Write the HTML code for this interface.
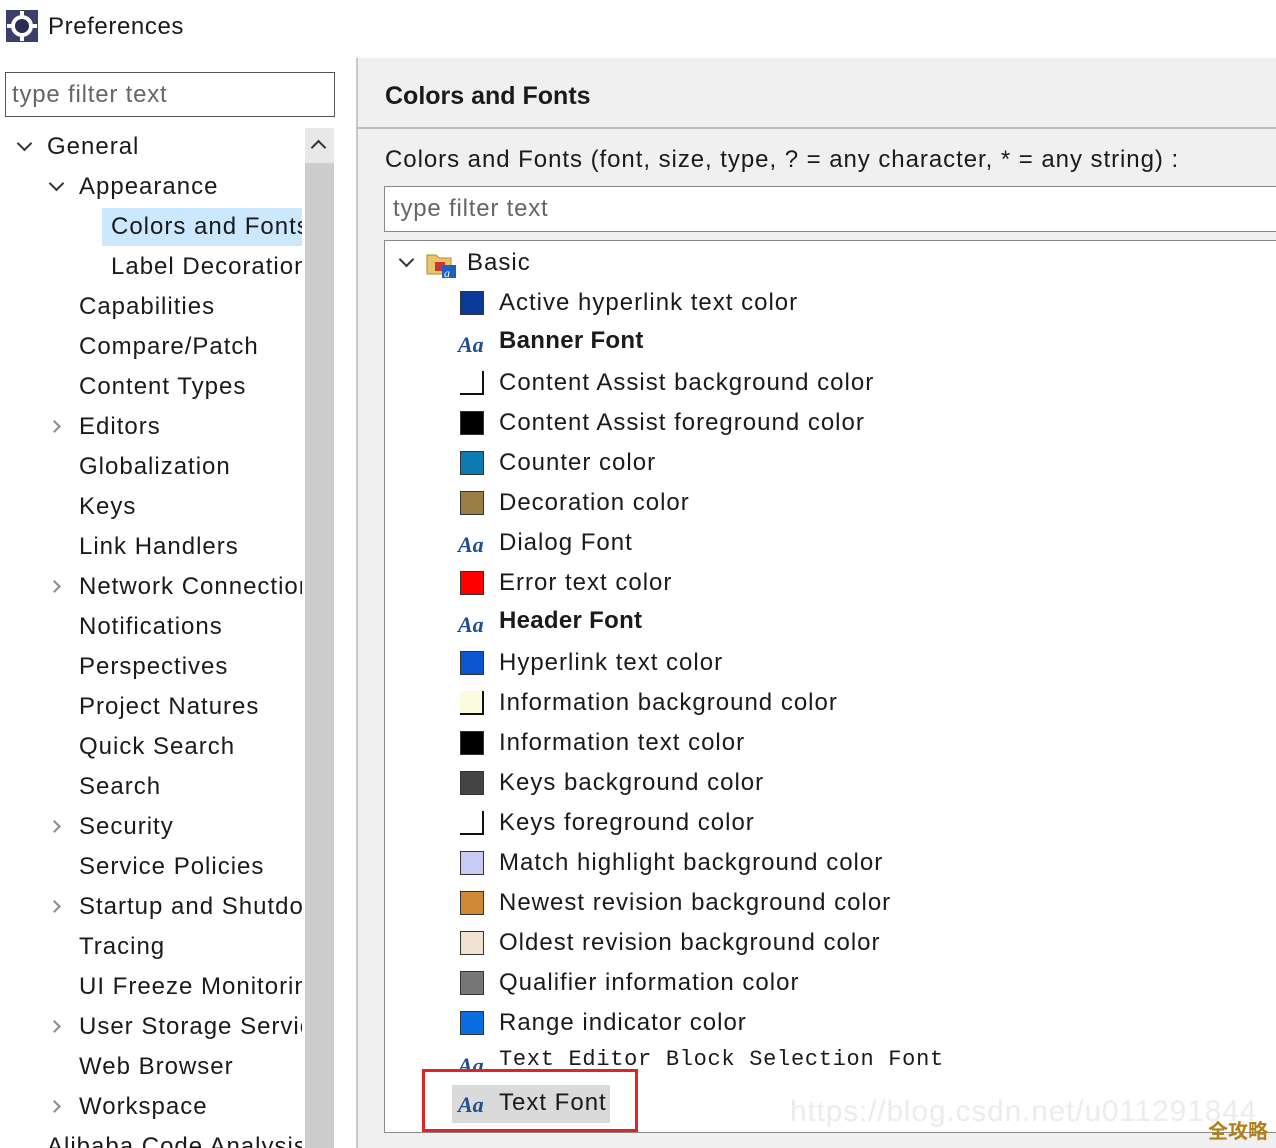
<!DOCTYPE html>
<html><head><meta charset="utf-8"><style>
*{margin:0;padding:0;box-sizing:border-box}
body{width:1276px;height:1148px;overflow:hidden;background:#fff;font-family:"Liberation Sans","DejaVu Sans",sans-serif;color:#1a1a1a;position:relative}
.a{position:absolute;white-space:nowrap}
.t{font-size:24px;line-height:40px;height:40px;letter-spacing:1px}
.sq{position:absolute;width:24px;height:24px;border:1px solid #333}
.lt{border:none;border-right:2px solid #111;border-bottom:2px solid #111}
.aa{position:absolute;font-family:"Liberation Serif",serif;font-style:italic;font-weight:bold;font-size:22px;color:#1f4f8f}
.chv{position:absolute;width:11px;height:11px;border-right:2px solid #333;border-bottom:2px solid #333}
.chr{position:absolute;width:9px;height:9px;border-right:2px solid #888;border-bottom:2px solid #888;transform:rotate(-45deg)}
</style></head><body>
<svg class="a" style="left:6px;top:10px" width="32" height="32" viewBox="0 0 32 32"><rect width="32" height="32" fill="#3b3f6b"/><circle cx="16" cy="16" r="11" fill="#fff"/><circle cx="16" cy="16" r="7" fill="#2a2e50"/><g fill="#fff"><rect x="14" y="1" width="4" height="5"/><rect x="14" y="26" width="4" height="5"/><rect x="1" y="14" width="5" height="4"/><rect x="26" y="14" width="5" height="4"/></g></svg>
<div class="a" style="left:48px;top:10px;font-size:24px;line-height:34px;letter-spacing:0.6px">Preferences</div>
<div class="a" style="left:5px;top:72px;width:330px;height:45px;border:1px solid #555;font-size:24px;line-height:43px;padding-left:6px;color:#666;letter-spacing:0.8px">type filter text</div>
<div class="a" style="left:305px;top:128px;width:29px;height:1020px;background:#e8e8e8"></div>
<div class="a" style="left:305px;top:163px;width:29px;height:985px;background:#cdcdcd"></div>
<div class="a" style="left:313px;top:142px;width:11px;height:11px;border-left:2px solid #333;border-top:2px solid #333;transform:rotate(45deg)"></div>
<div class="a" style="left:356px;top:58px;width:2px;height:1090px;background:#c8c8c8"></div>
<div class="a" style="left:0;top:0;width:302px;height:1148px;overflow:hidden">
<div class="chv" style="left:19px;top:138px;transform:rotate(45deg)"></div>
<div class="a t" style="left:47px;top:127px">General</div>
<div class="chv" style="left:51px;top:178px;transform:rotate(45deg)"></div>
<div class="a t" style="left:79px;top:167px">Appearance</div>
<div class="a" style="left:102px;top:208px;width:210px;height:38px;background:#cce8ff"></div>
<div class="a t" style="left:111px;top:207px">Colors and Fonts</div>
<div class="a t" style="left:111px;top:247px">Label Decorations</div>
<div class="a t" style="left:79px;top:287px">Capabilities</div>
<div class="a t" style="left:79px;top:327px">Compare/Patch</div>
<div class="a t" style="left:79px;top:367px">Content Types</div>
<div class="chr" style="left:50px;top:422px"></div><div class="a t" style="left:79px;top:407px">Editors</div>
<div class="a t" style="left:79px;top:447px">Globalization</div>
<div class="a t" style="left:79px;top:487px">Keys</div>
<div class="a t" style="left:79px;top:527px">Link Handlers</div>
<div class="chr" style="left:50px;top:582px"></div><div class="a t" style="left:79px;top:567px">Network Connections</div>
<div class="a t" style="left:79px;top:607px">Notifications</div>
<div class="a t" style="left:79px;top:647px">Perspectives</div>
<div class="a t" style="left:79px;top:687px">Project Natures</div>
<div class="a t" style="left:79px;top:727px">Quick Search</div>
<div class="a t" style="left:79px;top:767px">Search</div>
<div class="chr" style="left:50px;top:822px"></div><div class="a t" style="left:79px;top:807px">Security</div>
<div class="a t" style="left:79px;top:847px">Service Policies</div>
<div class="chr" style="left:50px;top:902px"></div><div class="a t" style="left:79px;top:887px">Startup and Shutdown</div>
<div class="a t" style="left:79px;top:927px">Tracing</div>
<div class="a t" style="left:79px;top:967px">UI Freeze Monitoring</div>
<div class="chr" style="left:50px;top:1022px"></div><div class="a t" style="left:79px;top:1007px">User Storage Service</div>
<div class="a t" style="left:79px;top:1047px">Web Browser</div>
<div class="chr" style="left:50px;top:1102px"></div><div class="a t" style="left:79px;top:1087px">Workspace</div>
<div class="a t" style="left:47px;top:1127px">Alibaba Code Analysis</div>
</div>
<div class="a" style="left:358px;top:58px;width:918px;height:1090px;background:#f0f0f0"></div>
<div class="a" style="left:385px;top:78px;font-size:25px;font-weight:bold;line-height:36px">Colors and Fonts</div>
<div class="a" style="left:358px;top:127px;width:918px;height:2px;background:#bdbdbd"></div>
<div class="a" style="left:385px;top:142px;font-size:24px;line-height:36px;letter-spacing:0.95px">Colors and Fonts (font, size, type, ? = any character, * = any string) :</div>
<div class="a" style="left:384px;top:186px;width:900px;height:46px;background:#fff;border:1px solid #888;font-size:24px;line-height:44px;padding-left:8px;color:#666;letter-spacing:0.8px">type filter text</div>
<div class="a" style="left:384px;top:240px;width:900px;height:893px;background:#fff;border:1px solid #888;overflow:hidden"></div>
<div class="chv" style="left:401px;top:254px;transform:rotate(45deg)"></div>
<svg class="a" style="left:425px;top:250px" width="32" height="28" viewBox="0 0 32 28"><path d="M2 5h9l3 3h12v16H2z" fill="#e9c66a" stroke="#b08a2a"/><rect x="10" y="12" width="10" height="9" fill="#c33"/><rect x="17" y="15" width="14" height="13" fill="#1e5fbf"/><text x="19" y="27" font-size="12" font-style="italic" font-family="Liberation Serif" fill="#fff">a</text></svg>
<div class="a t" style="left:467px;top:243px">Basic</div>
<div class="sq" style="left:460px;top:291px;background:#0a3b9a"></div><div class="a t" style="left:499px;top:283px">Active hyperlink text color</div>
<div class="aa" style="left:458px;top:332px">Aa</div><div class="a t" style="left:499px;top:321px;font-weight:bold;letter-spacing:0.3px">Banner Font</div>
<div class="sq lt" style="left:460px;top:371px"></div><div class="a t" style="left:499px;top:363px">Content Assist background color</div>
<div class="sq" style="left:460px;top:411px;background:#000"></div><div class="a t" style="left:499px;top:403px">Content Assist foreground color</div>
<div class="sq" style="left:460px;top:451px;background:#0a7ab0"></div><div class="a t" style="left:499px;top:443px">Counter color</div>
<div class="sq" style="left:460px;top:491px;background:#9b7d45"></div><div class="a t" style="left:499px;top:483px">Decoration color</div>
<div class="aa" style="left:458px;top:532px">Aa</div><div class="a t" style="left:499px;top:523px">Dialog Font</div>
<div class="sq" style="left:460px;top:571px;background:#ff0000"></div><div class="a t" style="left:499px;top:563px">Error text color</div>
<div class="aa" style="left:458px;top:612px">Aa</div><div class="a t" style="left:499px;top:601px;font-weight:bold;letter-spacing:0.3px">Header Font</div>
<div class="sq" style="left:460px;top:651px;background:#0a55d0"></div><div class="a t" style="left:499px;top:643px">Hyperlink text color</div>
<div class="sq lt" style="left:460px;top:691px;background:#fbfbe0"></div><div class="a t" style="left:499px;top:683px">Information background color</div>
<div class="sq" style="left:460px;top:731px;background:#000"></div><div class="a t" style="left:499px;top:723px">Information text color</div>
<div class="sq" style="left:460px;top:771px;background:#444"></div><div class="a t" style="left:499px;top:763px">Keys background color</div>
<div class="sq lt" style="left:460px;top:811px"></div><div class="a t" style="left:499px;top:803px">Keys foreground color</div>
<div class="sq" style="left:460px;top:851px;background:#c8ccf5"></div><div class="a t" style="left:499px;top:843px">Match highlight background color</div>
<div class="sq" style="left:460px;top:891px;background:#d08a36"></div><div class="a t" style="left:499px;top:883px">Newest revision background color</div>
<div class="sq" style="left:460px;top:931px;background:#f2e2d0"></div><div class="a t" style="left:499px;top:923px">Oldest revision background color</div>
<div class="sq" style="left:460px;top:971px;background:#777"></div><div class="a t" style="left:499px;top:963px">Qualifier information color</div>
<div class="sq" style="left:460px;top:1011px;background:#0a6ee0"></div><div class="a t" style="left:499px;top:1003px">Range indicator color</div>
<div class="aa" style="left:458px;top:1053px;height:18px;overflow:hidden">Aa</div><div class="a" style="left:499px;top:1044px;font-family:'Liberation Mono',monospace;font-size:22px;line-height:32px;letter-spacing:0.7px">Text Editor Block Selection Font</div>
<div class="a" style="left:452px;top:1085px;width:158px;height:38px;background:#dadada"></div>
<div class="aa" style="left:458px;top:1092px">Aa</div><div class="a t" style="left:499px;top:1083px">Text Font</div>
<div class="a" style="left:422px;top:1069px;width:216px;height:63px;border:3px solid #e02424"></div>
<div class="a" style="left:790px;top:1092px;font-size:30px;color:#ececec;line-height:40px;letter-spacing:0.8px">https://blog.csdn.net/u011291844</div>
<div class="a" style="left:1208px;top:1116px;font-size:20px;font-weight:bold;color:#b0801a;font-family:'Noto Sans CJK SC',sans-serif;line-height:28px">全攻略</div>
</body></html>
